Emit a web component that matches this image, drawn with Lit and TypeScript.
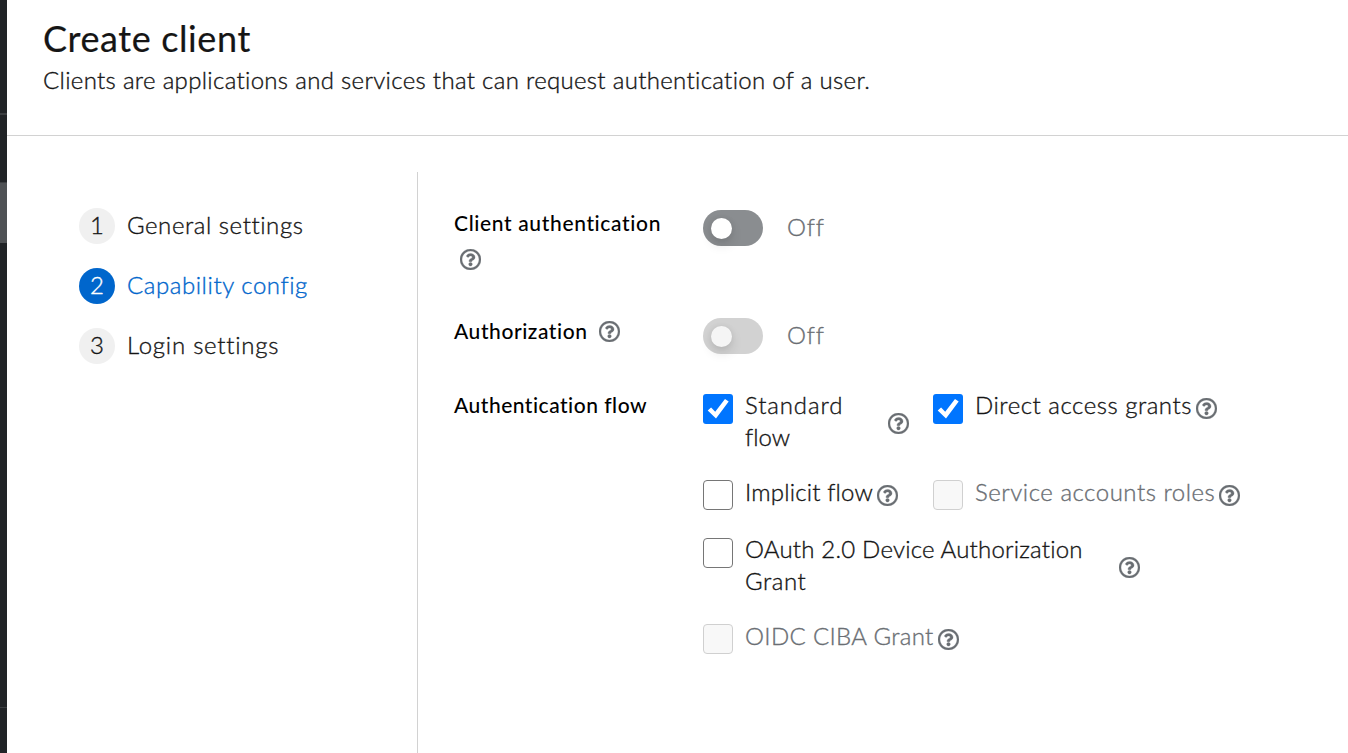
import { LitElement, html, css } from "lit";

interface Option {
  id: string;
  lines: string[];
  checked?: boolean;
  disabled?: boolean;
}

const steps = [
  { id: "general", label: "General settings" },
  { id: "capability", label: "Capability config", current: true },
  { id: "login", label: "Login settings" },
];

const flows: Option[] = [
  { id: "standard", lines: ["Standard", "flow"], checked: true },
  { id: "direct", lines: ["Direct access grants"], checked: true },
  { id: "implicit", lines: ["Implicit flow"] },
  { id: "service", lines: ["Service accounts roles"], disabled: true },
  { id: "device", lines: ["OAuth 2.0 Device Authorization", "Grant"] },
  { id: "ciba", lines: ["OIDC CIBA Grant"], disabled: true },
];

const helpIcon = html`<svg class="help" viewBox="8 8 496 496" aria-hidden="true">
  <path
    d="M256 8C119.043 8 8 119.083 8 256c0 136.997 111.043 248 248 248s248-111.003 248-248C504 119.083 392.957 8 256 8zm0 448c-110.532 0-200-89.431-200-200 0-110.495 89.472-200 200-200 110.491 0 200 89.471 200 200 0 110.53-89.431 200-200 200zm107.244-255.2c0 67.052-72.421 68.084-72.421 92.863V300c0 6.627-5.373 12-12 12h-45.647c-6.627 0-12-5.373-12-12v-8.659c0-35.745 27.1-50.034 47.579-61.516 17.561-9.845 28.324-16.541 28.324-29.579 0-17.246-21.999-28.693-39.784-28.693-23.189 0-33.894 10.977-48.942 29.969-4.057 5.12-11.46 6.071-16.666 2.124l-27.824-21.098c-5.107-3.872-6.251-11.066-2.644-16.363C184.846 131.491 214.94 112 261.794 112c49.071 0 101.45 38.304 101.45 88.8zM298 368c0 23.159-18.841 42-42 42s-42-18.841-42-42 18.841-42 42-42 42 18.841 42 42z"
  />
</svg>`;

const checkMark = html`<svg class="tick" viewBox="0 0 30 30" aria-hidden="true">
  <path d="M4.7 16.4 8.1 13.4 12.2 17.8 22 5 25.7 7.6 13 24.4z" />
</svg>`;

class AppRoot extends LitElement {
  static styles = css`
    :host {
      display: flex;
      height: 753px;
      overflow: hidden;
      background: #fff;
      color: #151515;
      font-family: Lato, "Liberation Sans", sans-serif;
      font-size: 24px;
      font-weight: 300;
      font-variant-ligatures: none;
      -webkit-text-stroke: 0.35px currentColor;
    }
    * {
      box-sizing: border-box;
    }
    .rail {
      flex: none;
      width: 7px;
      background: #212427;
      display: flex;
      flex-direction: column;
    }
    .rail-top {
      height: 115px;
      border-bottom: 2px solid #3c3f42;
    }
    .rail-gap {
      height: 67px;
    }
    .rail-current {
      height: 61px;
      background: #4f5255;
      border-top: 1px solid #3c3f42;
    }
    .rail-rest {
      height: 465px;
      border-bottom: 1px solid #3c3f42;
    }
    .page {
      flex: 1;
      display: flex;
      flex-direction: column;
      min-width: 0;
    }
    header {
      height: 136px;
      padding: 15px 36px 0;
      border-bottom: 1px solid #d2d2d2;
    }
    h1 {
      margin: 0;
      font-size: 36px;
      font-weight: 400;
      line-height: 47px;
      letter-spacing: 0.6px;
      -webkit-text-stroke: 0.2px currentColor;
    }
    .lead {
      margin: 0;
      line-height: 36px;
      letter-spacing: 0.32px;
      white-space: nowrap;
    }
    .wizard {
      flex: 1;
      display: flex;
      padding-top: 36px;
    }
    nav {
      width: 411px;
      padding: 36px 0 0 72px;
      border-right: 1px solid #d2d2d2;
      display: flex;
      flex-direction: column;
      gap: 24px;
    }
    .step {
      display: flex;
      align-items: center;
      gap: 12px;
      height: 36px;
      letter-spacing: 0.56px;
    }
    .step.login {
      letter-spacing: 0.75px;
    }
    .step-number {
      width: 36px;
      height: 36px;
      border-radius: 50%;
      background: #f0f0f0;
      text-align: center;
      line-height: 34px;
      letter-spacing: 0;
    }
    .step-label {
      padding-bottom: 4px;
    }
    .current {
      color: #06c;
    }
    .current .step-number {
      background: #06c;
      color: #fff;
    }
    .form {
      flex: 1;
      padding: 36px 0 0 36px;
    }
    .group {
      display: grid;
      grid-template-columns: 212px 1fr;
      column-gap: 37px;
    }
    .group-auth {
      height: 108px;
    }
    .group-authz {
      height: 74px;
    }
    .label {
      font-size: 21px;
      font-weight: 500;
      line-height: 30px;
      letter-spacing: 0.5px;
      color: #000;
      -webkit-text-stroke: 0;
      display: flex;
      flex-wrap: wrap;
      align-content: flex-start;
    }
    .group-auth .label {
      letter-spacing: 0.64px;
    }
    .group-authz .label {
      letter-spacing: 0.56px;
    }
    .label-help {
      display: flex;
      align-items: flex-start;
    }
    .group-auth .label-help {
      margin: 11px 0 0 6px;
    }
    .group-authz .label-help {
      margin: 5px 0 0 11.5px;
    }
    .help {
      flex: none;
      width: 21px;
      height: 21px;
      fill: #6a6e73;
      stroke: #6a6e73;
      stroke-width: 8;
      display: block;
    }
    .switch {
      display: flex;
      align-items: center;
      gap: 24px;
      height: 36px;
      margin-top: 2px;
      color: #6a6e73;
      letter-spacing: 0.8px;
    }
    .state {
      padding-bottom: 4px;
    }
    .track {
      width: 60px;
      height: 36px;
      padding: 8px;
      border-radius: 18px;
      background: #8a8d90;
    }
    .track.disabled {
      background: #d2d2d2;
    }
    .knob {
      display: block;
      width: 21px;
      height: 21px;
      border-radius: 50%;
      background: #fff;
      box-shadow: 0 6px 12px rgba(3, 3, 3, 0.12), 0 0 6px rgba(3, 3, 3, 0.06);
    }
    .disabled .knob {
      background: #f5f5f5;
    }
    .options {
      display: grid;
      grid-template-columns: 230px 1fr;
      row-gap: 24px;
    }
    .option {
      display: flex;
      align-items: flex-start;
      height: 33px;
      line-height: 32px;
    }
    .box {
      flex: none;
      width: 30px;
      height: 30px;
      margin: 4px 12px 0 0;
      border: 1.5px solid #767676;
      border-radius: 4px;
      background: #fff;
    }
    .implicit .box,
    .service .box,
    .ciba .box {
      margin-top: 3px;
    }
    .box.checked {
      border: 0;
      border-radius: 3px;
      background: #0075ff;
    }
    .option.disabled {
      color: #6a6e73;
    }
    .disabled .box {
      border-color: #d0d0d0;
      background: #f8f8f8;
    }
    .tick {
      display: block;
      fill: #fff;
    }
    .option .help {
      margin: 8px 0 0 4px;
    }
    .standard,
    .device {
      height: 63px;
    }
    .device,
    .ciba {
      grid-column: 1 / -1;
    }
    .text {
      margin-top: -1px;
    }
    .line {
      display: block;
    }
    .standard .text {
      width: 139px;
    }
    .device .text {
      width: 370px;
    }
    .option.standard .help,
    .option.device .help {
      margin-top: 23px;
    }
    .standard .line {
      letter-spacing: 0;
    }
    .standard .line:first-child {
      letter-spacing: 0.88px;
    }
    .direct .line,
    .service .line {
      letter-spacing: 0.52px;
    }
    .implicit .line {
      letter-spacing: 0.18px;
    }
    .device .line {
      letter-spacing: 0.55px;
    }
    .device .line:first-child {
      letter-spacing: 0.2px;
    }
    .ciba .line {
      letter-spacing: 0.33px;
    }
  `;

  private option(o: Option) {
    return html`<div class="option ${o.id} ${o.disabled ? "disabled" : ""}">
      <span class="box ${o.checked ? "checked" : ""}">${o.checked ? checkMark : ""}</span>
      <span class="text">${o.lines.map((line) => html`<span class="line">${line}</span>`)}</span>
      ${helpIcon}
    </div>`;
  }

  private toggle(disabled: boolean) {
    return html`<div class="switch">
      <span class="track ${disabled ? "disabled" : ""}"><span class="knob"></span></span>
      <span class="state">Off</span>
    </div>`;
  }

  render() {
    return html`
      <div class="rail">
        <div class="rail-top"></div>
        <div class="rail-gap"></div>
        <div class="rail-current"></div>
        <div class="rail-rest"></div>
      </div>
      <div class="page">
        <header>
          <h1>Create client</h1>
          <p class="lead">Clients are applications and services that can request authentication of a user.</p>
        </header>
        <div class="wizard">
          <nav>
            ${steps.map(
              (s, i) => html`<div class="step ${s.id} ${s.current ? "current" : ""}">
                <span class="step-number">${i + 1}</span><span class="step-label">${s.label}</span>
              </div>`
            )}
          </nav>
          <div class="form">
            <div class="group group-auth">
              <div class="label">
                <span>Client authentication</span>
                <span class="label-help">${helpIcon}</span>
              </div>
              ${this.toggle(false)}
            </div>
            <div class="group group-authz">
              <div class="label">
                <span>Authorization</span>
                <span class="label-help">${helpIcon}</span>
              </div>
              ${this.toggle(true)}
            </div>
            <div class="group">
              <div class="label"><span>Authentication flow</span></div>
              <div class="options">${flows.map((o) => this.option(o))}</div>
            </div>
          </div>
        </div>
      </div>
    `;
  }
}
customElements.define("app-root", AppRoot);
